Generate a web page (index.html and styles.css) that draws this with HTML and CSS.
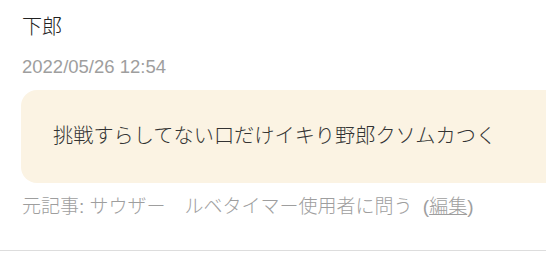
FILE: index.html
```html
<!DOCTYPE html>
<html lang="ja">
<head>
    <meta charset="UTF-8">
    <title>コメント</title>
    <link rel="stylesheet" href="styles.css">
</head>
<body>
    <div class="comment">
        <div class="comment-name">下郎</div>
        <div class="comment-date">2022/05/26 12:54</div>
        <div class="comment-body">
            <p>挑戦すらしてない口だけイキり野郎クソムカつく</p>
        </div>
        <div class="comment-meta">
            元記事: サウザー　ルベタイマー使用者に問う
            <span class="comment-edit">(<a href="#">編集</a>)</span>
        </div>
    </div>
</body>
</html>
```

FILE: styles.css
```css
* {
    box-sizing: border-box;
    margin: 0;
    padding: 0;
}

body {
    font-family: 'Liberation Sans', 'Noto Sans CJK JP', sans-serif;
    background: #ffffff;
    color: #333;
    overflow: hidden;
}

.comment {
    padding: 12px 0 29px 22px;
    border-bottom: 1px solid #dddddd;
}

.comment-name {
    font-size: 20px;
    font-weight: 300;
    line-height: 30px;
    color: #222;
}

.comment-date {
    margin-top: 11px;
    font-size: 18.5px;
    line-height: 28px;
    color: #9e9e9e;
}

.comment-body {
    margin: 9px -40px 0 -1px;
    padding: 31px 32px 32px 32px;
    background: #fbf3e3;
    border-radius: 16px;
}

.comment-body p {
    font-size: 20.2px;
    font-weight: 300;
    line-height: 30px;
    color: #333;
}

.comment-meta {
    margin-top: 10px;
    font-size: 19px;
    font-weight: 300;
    line-height: 28px;
    color: #9e9e9e;
}

.comment-edit {
    margin-left: 5px;
}

.comment-edit a {
    color: #9e9e9e;
    text-decoration: underline;
}
```
